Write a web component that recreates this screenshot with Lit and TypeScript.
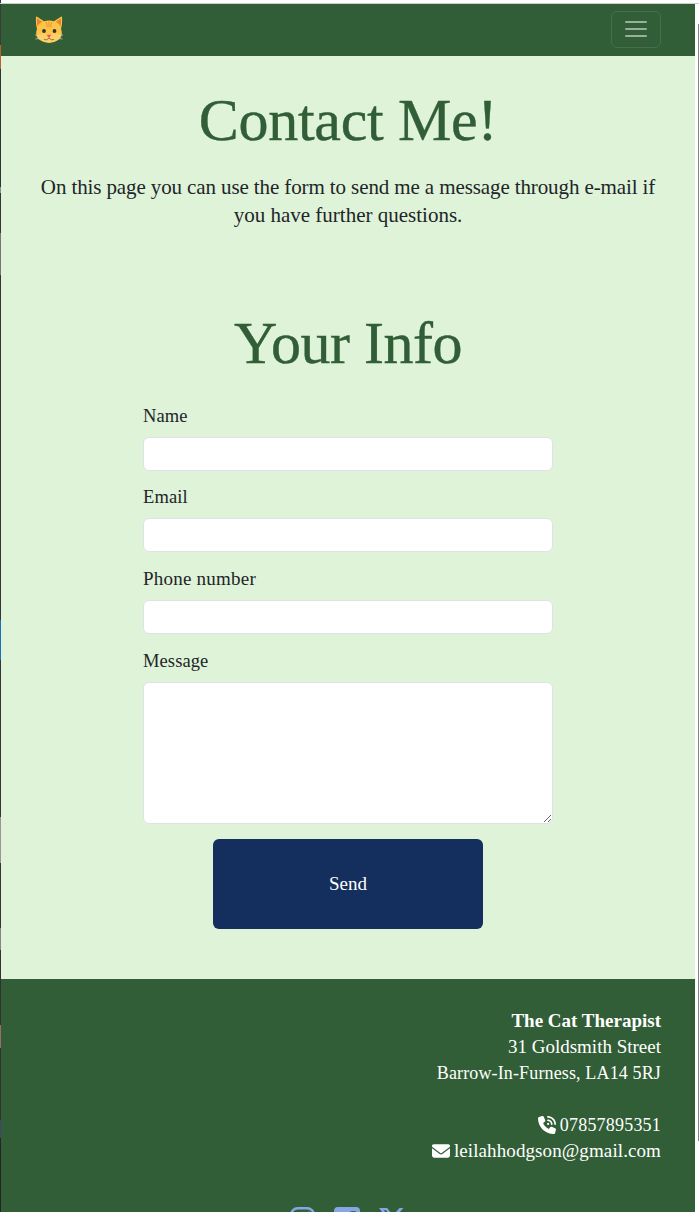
import { LitElement, html, css, svg } from "lit";
import { customElement } from "lit/decorators.js";

const FIELDS = [
  { name: "Name", cls: "short" },
  { name: "Email", cls: "short" },
  { name: "Phone number", cls: "long" },
];

const cat = svg`<svg class="cat" viewBox="0 0 28 28">
  <path d="M1 1.3Q.8.2 2 .8L9 5.2Q14 3.8 19 5.2L26 .8Q27.2.2 27 1.3Q27.5 8 26 13Q28.500 20 24 23.500Q19 27 14 27Q9 27 4 23.500Q-.5 20 2 13Q.5 8 1 1.300Z" fill="#ffc34a"/>
  <path d="M2 2.300 7.200 5.800Q4 7.500 2.500 10.500Q1.500 6 2 2.300ZM26 2.300 20.800 5.800Q24 7.500 25.500 10.500Q26.500 6 26 2.300Z" fill="#e8862e"/>
  <path d="M2.500 19Q8 16.500 14 18Q20 16.500 25.500 19Q25 26 14 26.500Q3 26 2.500 19Z" fill="#ffcf62"/>
  <path d="M14 5.500V11.500M11 6Q12.500 8 12 11M17 6Q15.500 8 16 11" fill="none" stroke="#e8932c" stroke-width="1"/>
  <circle cx="9" cy="15" r="1.900" fill="#35332e"/><circle cx="19.500" cy="15" r="1.900" fill="#35332e"/>
  <path d="M11.600 18.700H16.400L14 21.900Z" fill="#f0525f"/>
  <path d="M9 23.500Q12 24.800 14 22Q16 24.800 19 23.500" fill="none" stroke="#77705a" stroke-width=".9"/>
  <path d="M7 20 0 19M7 22 .5 23M21 20 28 19M21 22 27.500 23" stroke="#d9d9ab" stroke-width=".7"/>
</svg>`;

const phone = svg`<svg class="ico" viewBox="0 0 512 512" fill="currentColor"><path d="M280 0C408.100 0 512 103.900 512 232c0 13.300-10.700 24-24 24s-24-10.700-24-24c0-101.600-82.400-184-184-184c-13.300 0-24-10.700-24-24s10.700-24 24-24zm8 192a32 32 0 1 1 0 64 32 32 0 1 1 0-64zm-32-72c0-13.300 10.700-24 24-24c75.100 0 136 60.900 136 136c0 13.300-10.700 24-24 24s-24-10.700-24-24c0-48.600-39.400-88-88-88c-13.300 0-24-10.700-24-24zM117.500 1.400c19.400-5.300 39.700 4.600 47.400 23.200l40 96c6.800 16.300 2.100 35.200-11.600 46.300L144 207.300c33.300 70.400 90.300 127.400 160.700 160.700L345 318.700c11.200-13.700 30-18.400 46.300-11.600l96 40c18.600 7.700 28.500 28 23.200 47.400l-24 88C481.800 499.900 466 512 448 512C200.600 512 0 311.400 0 64C0 46 12.100 30.200 29.500 25.400l88-24z"/></svg>`;

const mail = svg`<svg class="ico" viewBox="0 0 512 512" fill="currentColor"><path d="M48 64C21.500 64 0 85.500 0 112c0 15.100 7.100 29.300 19.200 38.400L236.800 313.600c11.400 8.500 27 8.500 38.400 0L492.800 150.400c12.100-9.100 19.200-23.300 19.200-38.400c0-26.500-21.500-48-48-48H48zM0 176V384c0 35.300 28.700 64 64 64H448c35.300 0 64-28.700 64-64V176L294.400 339.200c-22.800 17.100-54 17.100-76.800 0L0 176z"/></svg>`;

const instagram = svg`<svg class="ig" viewBox="0 0 25 26" fill="none" stroke="currentColor" stroke-width="2.400"><rect x="1.200" y="1.200" width="22.600" height="23.600" rx="6.500"/><circle cx="12.500" cy="13" r="5.400"/><circle cx="19" cy="6.200" r=".6"/></svg>`;
const facebook = svg`<svg viewBox="0 0 26 26" fill="currentColor"><path d="M4 0H22a4 4 0 0 1 4 4V22a4 4 0 0 1-4 4H18V17h3.500l.6-4H18V10.500q0-2 2.200-2h2V4.400Q14 2.800 14 9.500V13H10.500v4H14v9H4a4 4 0 0 1-4-4V4a4 4 0 0 1 4-4Z"/></svg>`;
const xLogo = svg`<svg viewBox="0 0 26 26" fill="currentColor"><path fill-rule="evenodd" d="M20.500 1h3.900L15.700 10.900 26 24.500H18L11.700 16.300 4.500 24.500H.6L9.900 13.900 0 1H8.200l5.700 7.500ZM19.100 22.200h2.200L7 3.200H4.700Z"/></svg>`;

@customElement("app-root")
export class AppRoot extends LitElement {
  static styles = css`
    :host {
      display: block; box-sizing: border-box; width: 100%; height: 1212px; overflow: hidden;
      position: relative; padding: 4px 4px 0 1px; background: #fdfdfd;
      font: 18px/26px "Liberation Serif", serif; color: #212529;
    }
    * { box-sizing: border-box; }
    .edge { position: absolute; left: 0; top: 0; width: 1px; height: 100%;
      background: linear-gradient(#3b3b3e 0 45px, #b9602e 45px 69px, #303136 69px 187px, #85919a 187px 193px, #34343a 193px 233px, #777 233px 275px, #34343a 275px 620px, #1874b4 620px 660px, #34343a 660px 817px, #9a9494 817px 863px, #34343a 863px 928px, #86858a 928px 950px, #303035 950px 1025px, #a06868 1025px 1048px, #303035 1048px 1120px, #454075 1120px 1138px, #242429 1138px); }
    .thumb { position: absolute; right: 0; top: 24px; width: 1px; height: 1117px; background: #858585; }
    .topline { position: absolute; left: 0; right: 0; top: 3px; height: 1px; background: #c9cfc9; }
    header { height: 52px; background: #315e36; display: flex; align-items: flex-start; justify-content: space-between; padding: 7px 34px 0; }
    .cat { width: 28px; height: 28px; display: block; margin-top: 5px; }
    .toggle { width: 50px; height: 37px; padding: 0 1px 1px 0; border: 1px solid #467049; border-radius: 6px; background: none; display: grid; place-items: center; }
    .toggle svg { width: 22px; height: 18px; display: block; }
    main { height: 923px; background: #dff3d8; display: flex; flex-direction: column; align-items: center; padding-top: 31px; }
    h1, h2 { margin: 0; font-weight: 400; font-size: 60px; line-height: 66px; color: #315e36; white-space: nowrap; -webkit-text-stroke: .4px #315e36; }
    h1 { letter-spacing: -.3px; }
    h2 { letter-spacing: -.5px; margin-top: 81px; }
    .intro { margin: 20px 0 0; font-size: 21px; line-height: 28px; height: 56px; text-align: center; white-space: nowrap; }
    .intro span { display: block; }
    .i1 { letter-spacing: -.11px; }
    form { width: 410px; margin-top: 26.500px; display: flex; flex-direction: column; }
    label { height: 26px; margin-bottom: 8px; font-size: 18.500px; }
    .short { letter-spacing: .1px; }
    .long { font-size: 19px; letter-spacing: .22px; }
    input, textarea { display: block; width: 100%; margin: 0; padding: 6px 12px; border: 1px solid #dee2e6; border-radius: 6px; background: #fff; font: inherit; outline: none; }
    input { height: 34px; margin-bottom: 13.800px; }
    textarea { height: 142px; resize: vertical; }
    .send { align-self: center; width: 270px; height: 90px; margin-top: 15px; border: 0; border-radius: 6px; background: #142f5e; color: #fff; font: inherit; font-size: 19px; }
    footer { height: 233px; background: #315e36; color: #fff; padding: 29px 34px 0; }
    address { font-style: normal; display: flex; flex-direction: column; align-items: flex-end; white-space: nowrap; }
    strong, .a1, .mail { font-size: 19px; }
    .a2 { letter-spacing: .14px; }
    .tel { letter-spacing: .2px; }
    .mail { letter-spacing: .1px; }
    .contact { display: flex; gap: 4px; align-items: center; }
    .first { margin-top: 26px; }
    .ico { width: 18px; height: 18px; display: block; }
    .social { display: flex; justify-content: center; gap: 19px; margin-top: 43px; padding-right: 1px; color: #86a7e5; }
    .social svg { width: 26px; height: 26px; display: block; }
    .social .ig { width: 25px; }
  `;

  render() {
    return html`
      <div class="edge"></div><div class="topline"></div><div class="thumb"></div>
      <header>
        ${cat}
        <button class="toggle" aria-label="Toggle navigation">
          <svg viewBox="0 0 22 18" stroke="#98af9b" stroke-width="2" stroke-linecap="round"><path d="M1 2H21M1 9H21M1 16H21"/></svg>
        </button>
      </header>
      <main>
        <h1>Contact Me!</h1>
        <p class="intro"><span class="i1">On this page you can use the form to send me a message through e-mail if</span><span>you have further questions.</span></p>
        <h2>Your Info</h2>
        <form>
          ${FIELDS.map((f) => html`<label class=${f.cls}>${f.name}</label><input aria-label=${f.name} />`)}
          <label class="short">Message</label><textarea aria-label="Message"></textarea>
          <button class="send" type="button">Send</button>
        </form>
      </main>
      <footer>
        <address>
          <strong>The Cat Therapist</strong>
          <span class="a1">31 Goldsmith Street</span>
          <span class="a2">Barrow-In-Furness, LA14 5RJ</span>
          <span class="contact first">${phone}<span class="tel">07857895351</span></span>
          <span class="contact">${mail}<span class="mail">leilahhodgson@gmail.com</span></span>
        </address>
        <div class="social">${instagram}${facebook}${xLogo}</div>
      </footer>
    `;
  }
}
